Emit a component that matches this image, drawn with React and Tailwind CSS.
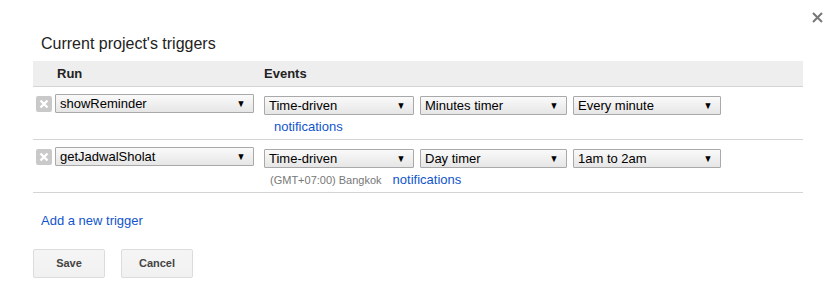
import React from "react";

const Select = ({ value, w, className = "" }) => (
  <div
    className={`shrink-0 flex items-center justify-between h-[19px] border border-[#a9a9a9] rounded-[1px] bg-gradient-to-b from-[#fafafa] to-[#e6e6e6] pl-[4px] pr-[7px] text-[13px] text-black leading-none ${w} ${className}`}
  >
    <span>{value}</span>
    <span className="text-[10px] scale-x-90">▼</span>
  </div>
);

const RemoveBox = () => (
  <div className="shrink-0 w-[16px] h-[16px] bg-[#c9c9c9] rounded-[2px] flex items-center justify-center">
    <svg width="10" height="10" viewBox="0 0 10 10">
      <path d="M1.5 1.5 L8.5 8.5 M8.5 1.5 L1.5 8.5" stroke="#fff" strokeWidth="2.4" />
    </svg>
  </div>
);

const Link = ({ children, className = "" }) => (
  <span className={`text-[13px] text-[#1155cc] ${className}`}>{children}</span>
);

const TriggerRow = ({ fn, events, note }) => (
  <div className="flex border-b border-[#d4d4d4] h-[53px]">
    <div className="shrink-0 w-[231px] flex items-start gap-[3px] pl-[3px] pt-[7px]">
      <div className="shrink-0 pt-[2px]">
        <RemoveBox />
      </div>
      <Select value={fn} w="w-[199px]" />
    </div>
    <div className="flex flex-col pt-[9px]">
      <div className="flex gap-[6px]">
        <Select value={events[0]} w="w-[150px]" />
        <Select value={events[1]} w="w-[147px]" />
        <Select value={events[2]} w="w-[148px]" />
      </div>
      {note}
    </div>
  </div>
);

const App = () => (
  <div className="relative w-[839px] h-[283px] bg-white font-['Liberation_Sans',Arial,sans-serif] text-[#222]">
    <svg className="absolute left-[812px] top-[12px]" width="11" height="11" viewBox="0 0 11 11">
      <path d="M1 1 L10 10 M10 1 L1 10" stroke="#777" strokeWidth="2" />
    </svg>

    <div className="pt-[34px] pl-[33px] w-[803px]">
      <h1 className="pl-[8px] text-[16px] leading-[20px] text-[#222] mb-[7px]">
        Current project's triggers
      </h1>

      <div className="flex h-[26px] items-center bg-[#eeeeee] border-b border-[#d4d4d4] text-[13px] font-bold text-[#222]">
        <div className="w-[231px] pl-[24px]">Run</div>
        <div>Events</div>
      </div>

      <TriggerRow
        fn="showReminder"
        events={["Time-driven", "Minutes timer", "Every minute"]}
        note={<Link className="pl-[10px] pt-[4px] leading-[16px]">notifications</Link>}
      />
      <TriggerRow
        fn="getJadwalSholat"
        events={["Time-driven", "Day timer", "1am to 2am"]}
        note={
          <div className="flex items-baseline pl-[6px] pt-[4px] leading-[16px]">
            <span className="text-[11px] text-[#777]">(GMT+07:00) Bangkok</span>
            <Link className="ml-[11px]">notifications</Link>
          </div>
        }
      />

      <div className="pl-[8px] pt-[19px] leading-[16px]">
        <Link>Add a new trigger</Link>
      </div>

      <div className="flex gap-[16px] pt-[20px]">
        <button className="w-[72px] h-[29px] border border-[#dcdcdc] rounded-[2px] bg-gradient-to-b from-[#f5f5f5] to-[#f1f1f1] text-[11px] font-bold text-[#444]">
          Save
        </button>
        <button className="w-[72px] h-[29px] border border-[#dcdcdc] rounded-[2px] bg-gradient-to-b from-[#f5f5f5] to-[#f1f1f1] text-[11px] font-bold text-[#444]">
          Cancel
        </button>
      </div>
    </div>
  </div>
);

export default App;
